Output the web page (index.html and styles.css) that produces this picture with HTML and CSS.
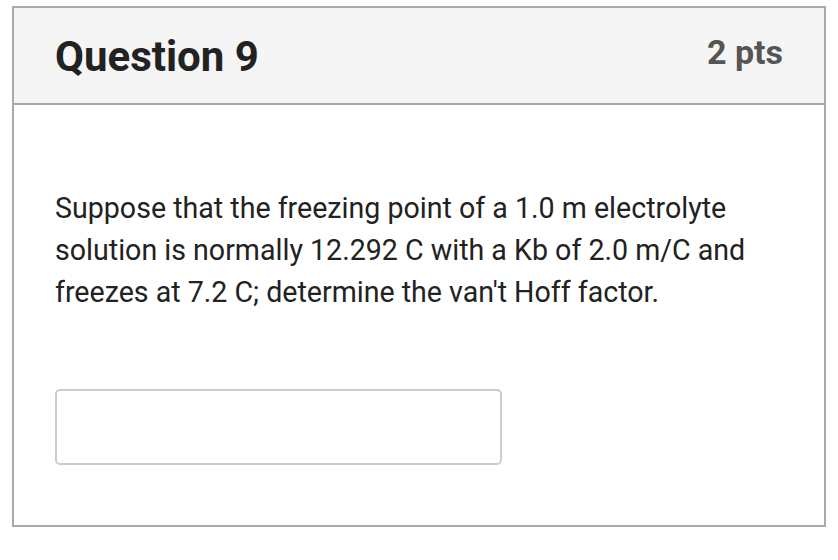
FILE: index.html
```html
<!DOCTYPE html>
<html lang="en">
<head>
<meta charset="utf-8">
<title>Question 9</title>
<link rel="stylesheet" href="styles.css">
</head>
<body>
<div class="card">
  <div class="card-header">
    <h2 class="title">Question 9</h2>
    <span class="points">2 pts</span>
  </div>
  <div class="card-body">
    <p class="question-text">Suppose that the freezing point of a 1.0 m electrolyte solution is normally 12.292 C with a Kb of 2.0 m/C and freezes at 7.2 C; determine the van't Hoff factor.</p>
    <input class="answer" type="text" aria-label="Answer">
  </div>
</div>
</body>
</html>
```
FILE: styles.css
```css
* { box-sizing: border-box; }
html, body { background: #fff; }
body {
  margin: 0;
  padding: 6px 12px;
  font-family: Roboto, "Liberation Sans", sans-serif;
  color: #222;
}
.card {
  width: 814px;
  border: 2px solid #aaaaaa;
}
.card-header {
  height: 97px;
  background: #f5f5f5;
  border-bottom: 2px solid #aaaaaa;
  padding: 0 41px;
  display: flex;
  align-items: center;
  justify-content: space-between;
}
.title {
  margin: 0;
  font-size: 42px;
  font-weight: 700;
  color: #222;
  line-height: 1;
  padding-top: 2px;
}
.points {
  font-size: 34px;
  font-weight: 700;
  color: #555;
  line-height: 1;
  padding-bottom: 8px;
}
.card-body {
  padding: 82px 41px 60px;
}
.question-text {
  margin: 0 0 76px;
  font-size: 28.6px;
  line-height: 42px;
  color: #222;
}
.answer {
  display: block;
  width: 447px;
  height: 76px;
  border: 2px solid #cccccc;
  border-radius: 5px;
  background: #fff;
  margin: 0;
  padding: 0 10px;
  font: inherit;
}
```
